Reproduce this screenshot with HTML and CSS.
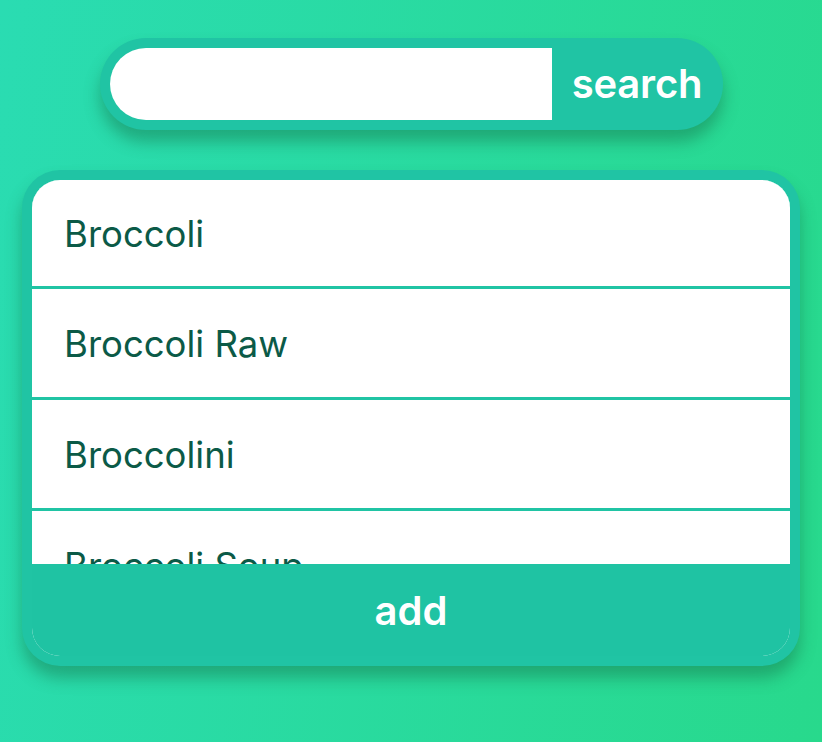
FILE: index.html
```html
<!DOCTYPE html>
<html>
<head>
<meta charset="utf-8">
<link rel="stylesheet" href="styles.css">
</head>
<body>
<div class="page">
  <form class="search">
    <input class="search-input" type="text">
    <button class="search-btn" type="button">search</button>
  </form>
  <div class="card">
    <div class="card-inner">
      <ul class="list">
        <li class="item">Broccoli</li>
        <li class="item">Broccoli Raw</li>
        <li class="item">Broccolini</li>
        <li class="item">Broccoli Soup</li>
      </ul>
      <button class="add" type="button">add</button>
    </div>
  </div>
</div>
</body>
</html>
```
FILE: styles.css
```css
html, body {
  margin: 0;
  height: 100%;
}
body {
  background: linear-gradient(100deg, #2adcb2 0%, #28d98c 100%);
  font-family: Inter, "Noto Sans", sans-serif;
  overflow: hidden;
}
.page {
  display: flex;
  flex-direction: column;
  align-items: center;
  padding-top: 38px;
  gap: 40px;
}
.search {
  display: flex;
  width: 623px;
  height: 92px;
  box-sizing: border-box;
  padding: 10px;
  margin: 0;
  background: #20c4a4;
  border-radius: 46px;
  box-shadow: 0 12px 16px rgba(20, 110, 70, 0.45);
}
.search-input {
  width: 442px;
  height: 72px;
  box-sizing: border-box;
  border: none;
  outline: none;
  border-radius: 36px 0 0 36px;
  background: #fff;
  padding: 0 24px;
  font: inherit;
  font-size: 30px;
}
.search-btn {
  flex: 1;
  border: none;
  background: transparent;
  color: #fff;
  font-family: inherit;
  font-size: 40px;
  font-weight: 600;
  padding: 0 0 0 10px;
  text-align: center;
  line-height: 72px;
  letter-spacing: -0.2px;
}
.card {
  width: 778px;
  height: 496px;
  box-sizing: border-box;
  padding: 10px;
  background: #20c4a4;
  border-radius: 38px;
  box-shadow: 0 12px 16px rgba(20, 110, 70, 0.45);
}
.card-inner {
  height: 100%;
  display: flex;
  flex-direction: column;
  background: #fff;
  border-radius: 28px;
  overflow: hidden;
}
.list {
  list-style: none;
  margin: 0;
  padding: 0;
  flex: 1;
  overflow: hidden;
  display: flex;
  flex-direction: column;
  gap: 3px;
  background: #20c4a4;
}
.item {
  flex: 0 0 auto;
  height: 108px;
  box-sizing: border-box;
  background: #fff;
  padding: 2px 32px 0;
  display: flex;
  align-items: center;
  color: #0b5a47;
  font-size: 36.5px;
}
.item:first-child {
  height: 106px;
}
.add {
  flex: 0 0 92px;
  border: none;
  background: #1fc3a3;
  color: #fff;
  font-family: inherit;
  font-size: 40px;
  font-weight: 600;
  padding: 0;
}
```
